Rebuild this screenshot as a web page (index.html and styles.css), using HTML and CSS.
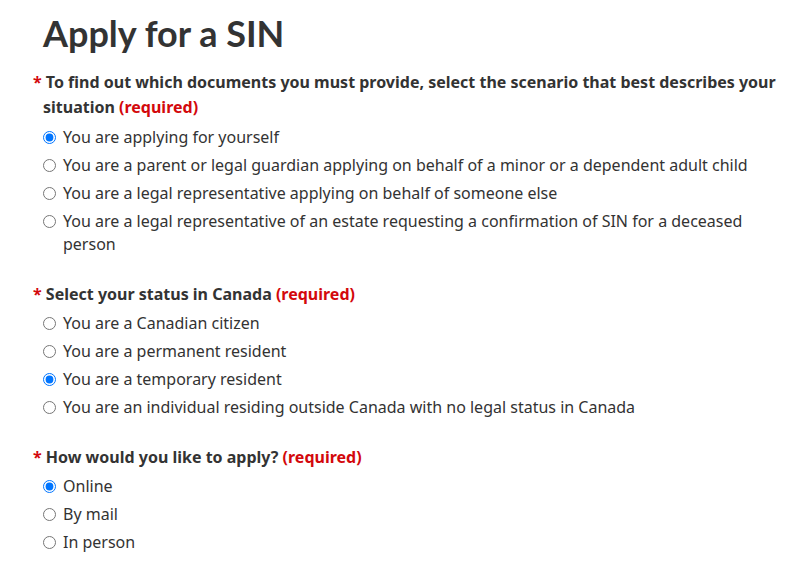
FILE: index.html
```html
<!DOCTYPE html>
<html lang="en">
<head>
<meta charset="utf-8">
<title>Apply for a SIN</title>
<link rel="stylesheet" href="styles.css">
</head>
<body>
<main class="page">
  <h1 class="title">Apply for a SIN</h1>

  <fieldset class="group group-first">
    <legend class="question"><span class="star">*</span> To find out which documents you must provide, select the scenario that best describes your situation <strong class="req">(required)</strong></legend>
    <ul class="options">
      <li><label class="opt"><input type="radio" name="scenario" checked><span>You are applying for yourself</span></label></li>
      <li><label class="opt"><input type="radio" name="scenario"><span>You are a parent or legal guardian applying on behalf of a minor or a dependent adult child</span></label></li>
      <li><label class="opt"><input type="radio" name="scenario"><span>You are a legal representative applying on behalf of someone else</span></label></li>
      <li><label class="opt"><input type="radio" name="scenario"><span>You are a legal representative of an estate requesting a confirmation of SIN for a deceased person</span></label></li>
    </ul>
  </fieldset>

  <fieldset class="group">
    <legend class="question"><span class="star">*</span> Select your status in Canada <strong class="req">(required)</strong></legend>
    <ul class="options">
      <li><label class="opt"><input type="radio" name="status"><span>You are a Canadian citizen</span></label></li>
      <li><label class="opt"><input type="radio" name="status"><span>You are a permanent resident</span></label></li>
      <li><label class="opt"><input type="radio" name="status" checked><span>You are a temporary resident</span></label></li>
      <li><label class="opt"><input type="radio" name="status"><span>You are an individual residing outside Canada with no legal status in Canada</span></label></li>
    </ul>
  </fieldset>

  <fieldset class="group">
    <legend class="question"><span class="star">*</span> How would you like to apply? <strong class="req">(required)</strong></legend>
    <ul class="options">
      <li><label class="opt"><input type="radio" name="method" checked><span>Online</span></label></li>
      <li><label class="opt"><input type="radio" name="method"><span>By mail</span></label></li>
      <li><label class="opt"><input type="radio" name="method"><span>In person</span></label></li>
    </ul>
  </fieldset>
</main>
</body>
</html>
```

FILE: styles.css
```css
html, body {
  margin: 0;
  padding: 0;
  background: #fff;
}

body {
  font-family: "Noto Sans", "DejaVu Sans", sans-serif;
  font-size: 16px;
  color: #333;
}

.page {
  padding: 13px 12px 0 33px;
}

.title {
  font-family: Lato, "Noto Sans", sans-serif;
  font-weight: 700;
  font-size: 36px;
  line-height: 40px;
  color: #333;
  margin: 0 0 17px 10px;
}

.group {
  border: 0;
  margin: 0 0 21px 0;
  padding: 0;
  min-width: 0;
}

.question {
  padding: 0 0 0 10px;
  text-indent: -10px;
  font-weight: 700;
  line-height: 25px;
  margin: 0 0 5px 0;
  float: left;
  width: 100%;
  box-sizing: border-box;
}

.group-first .question {
  margin-bottom: 6px;
}

.star {
  color: #d3080c;
}

.req {
  color: #d3080c;
  font-weight: 700;
}

.options {
  clear: both;
  list-style: none;
  margin: 0;
  padding: 0 0 0 10px;
}

.options li {
  margin: 0 0 5px 0;
}

.opt {
  display: flex;
  align-items: flex-start;
  line-height: 23px;
}

.opt input {
  flex: none;
  width: 13px;
  height: 13px;
  margin: 5px 7px 0 0;
}
```
